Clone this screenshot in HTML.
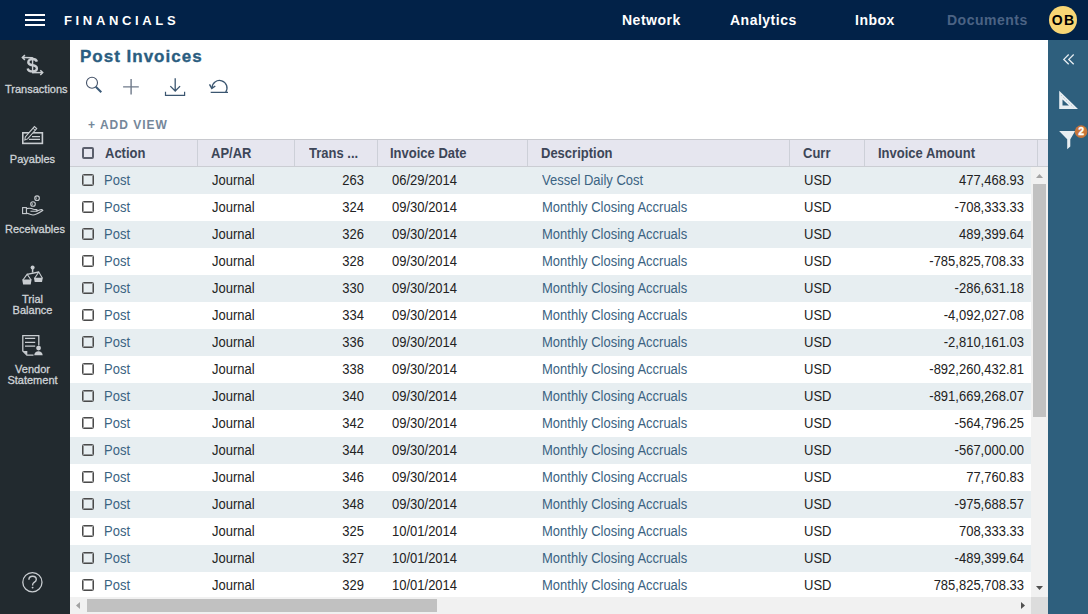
<!DOCTYPE html>
<html><head><meta charset="utf-8">
<style>
*{box-sizing:border-box;margin:0;padding:0}
html,body{width:1088px;height:614px;overflow:hidden;background:#fff;font-family:"Liberation Sans",sans-serif}
.abs{position:absolute}
#top{position:absolute;left:0;top:0;width:1088px;height:40px;background:#022248}
#ham{left:25px;top:14px;width:20px;height:12px}
#ham i{position:absolute;left:0;width:20px;height:2px;background:#fff}
#brand{left:64px;top:13px;font-size:13px;font-weight:bold;color:#fff;letter-spacing:3.65px;line-height:16px}
.nav{position:absolute;top:12px;font-size:14px;font-weight:bold;color:#fff;letter-spacing:0.5px;line-height:17px}
#avatar{left:1049px;top:6px;width:28px;height:28px;border-radius:50%;background:#f8d675;color:#000;font-size:14px;font-weight:bold;text-align:center;line-height:29px;letter-spacing:1.2px;text-indent:1px}
#side{position:absolute;left:0;top:40px;width:70px;height:574px;background:#222a2f}
.sitem{position:absolute;left:5px;width:55px;white-space:nowrap;text-align:center;color:#cfd3d7;font-size:11px;line-height:11px;-webkit-text-stroke:0.3px #cfd3d7}
.sitem svg{position:absolute;left:22px}
#right{position:absolute;left:1048px;top:40px;width:40px;height:574px;background:#2e5f7d}
#title{left:80px;top:47px;font-size:17px;font-weight:bold;color:#2a5d80;letter-spacing:1.0px;-webkit-text-stroke:0.35px #2a5d80;line-height:20px}
#addview{left:88px;top:118px;font-size:12px;font-weight:bold;color:#75879a;letter-spacing:1.0px;line-height:14px}
#grid{position:absolute;left:70px;top:139px;width:978px;height:475px;overflow:hidden}
#ghead{position:absolute;left:0;top:0;width:978px;height:28px;background:#e6e6ef;border-top:1px solid #c8c9ce;border-bottom:1px solid #cbcdd3}
.hc{position:absolute;top:1px;height:26px;line-height:26px;font-size:13px;font-weight:bold;color:#3d4658;white-space:nowrap;transform:scaleY(1.1);transform-origin:0 17.5px}
.sep{position:absolute;top:0;width:1px;height:26px;background:#cdd0d8}
.row{position:absolute;left:0;width:961px;height:27px;line-height:27px;font-size:13px;color:#222}
.row.o{background:#e7eef1}
.row span{position:absolute;top:0;white-space:nowrap;transform:scaleY(1.1);transform-origin:0 18px}
.lnk{color:#3b6382}
.cb{position:absolute;left:12px;top:7px;width:12px;height:12px;border:1px solid #4a4a4a;border-radius:1.5px;box-shadow:inset 0 0 0 1px rgba(74,74,74,0.55)}
.r{text-align:right}
</style></head><body>
<div id="top">
  <div id="ham" class="abs"><i style="top:0"></i><i style="top:5px"></i><i style="top:10px"></i></div>
  <div id="brand" class="abs">FINANCIALS</div>
  <div class="nav" style="left:622px">Network</div>
  <div class="nav" style="left:730px">Analytics</div>
  <div class="nav" style="left:855px">Inbox</div>
  <div class="nav" style="left:947px;color:#4b6384">Documents</div>
  <div id="avatar" class="abs">OB</div>
</div>
<div id="side">
  <svg class="abs" style="left:0;top:0" width="70" height="574" viewBox="0 40 70 574" fill="none" stroke="#c9cdd1">
    <path d="M36.9 61.6 C36.4 59.9 34.6 59 32.5 59 C30.1 59 28.3 60.3 28.3 62.3 C28.3 64.5 30.5 65 32.5 65.3 C35 65.7 36.9 66.5 36.9 68.5 C36.9 70.5 34.9 71.4 32.5 71.4 C30 71.4 28.1 70.4 27.7 68.4" stroke-width="2.4"/>
    <path d="M32.6 57.3 V73.4" stroke-width="1.4"/>
    <path d="M22.6 57.5 L32.6 57.8" stroke-width="1.5"/>
    <path d="M24.9 55.1 L22.4 57.5 L24.9 59.9" stroke-width="1.5"/>
    <path d="M33 72.6 L42.5 72.6" stroke-width="1.5"/>
    <path d="M40.3 70.2 L42.7 72.6 L40.3 75" stroke-width="1.5"/>
    <!-- payables -->
    <rect x="22.8" y="132.8" width="19.6" height="10.6" stroke-width="1.6"/>
    <path d="M32 136.6 H40 M29 139.4 H40" stroke-width="1.3"/>
    <path d="M24.8 140 L25.3 136.9 L34.4 126.6 L36.7 128.6 L27.6 138.9 Z" fill="#222a2f" stroke-width="1.1"/>
    <path d="M33 128.3 L35.2 130.2" stroke-width="0.9"/>
    <!-- receivables -->
    <circle cx="37.05" cy="198.2" r="2.3" stroke-width="1.1"/>
    <circle cx="33" cy="204" r="2.3" stroke-width="1.1"/>
    <path d="M36.3 197.3 V199.2 M32.3 203.1 V205" stroke-width="0.8"/>
    <rect x="22.6" y="207.6" width="3.8" height="6" stroke-width="1.1"/>
    <path d="M26.5 208.6 C28.5 208 31 208 33.5 209.2 L36.5 209.6 C37.6 209.9 37.6 211.3 36.3 211.3 L30.5 211.3" stroke-width="1.1"/>
    <path d="M26.5 213 C28 213.5 30.5 215 33 215 C36 215 40 212.2 42.8 210.5 C42.5 209.5 41.2 209.3 39.5 210 L36.3 211.3" stroke-width="1.1"/>
    <!-- trial balance -->
    <circle cx="32.6" cy="267.4" r="2" fill="#c9cdd1" stroke="none"/>
    <path d="M32.6 268.5 V272.6" stroke-width="1.5"/>
    <path d="M27.1 274.3 L38.8 272" stroke-width="1.3"/>
    <path d="M22.9 280 L27.1 274.3 L31.1 280 M34.6 278.2 L38.8 272 L42.4 278.2" stroke-width="1.1"/>
    <path d="M22.2 279.5 H31.6 L30.7 284.5 H23.1 Z M33.9 277.8 H42.8 L42 282 H34.7 Z" fill="#c9cdd1" stroke="none"/>
    <!-- vendor statement -->
    <path d="M38.8 345.5 V335.6 H22.8 V351 L26.9 355.1 H33.5" stroke-width="1.3"/>
    <path d="M23.3 351 H27.3 V355 Z" fill="#c9cdd1" stroke="none"/>
    <path d="M25 338.4 H35.2 M25 342.3 H35.2 M25 346.2 H35.2" stroke-width="1.3"/>
    <circle cx="38.55" cy="348.1" r="2.4" fill="#c9cdd1" stroke="none"/>
    <path d="M34.2 355.3 C34.4 352.8 36.3 351.3 38.45 351.3 C40.6 351.3 42.5 352.8 42.7 355.3 Z" fill="#c9cdd1" stroke="none"/>
    <!-- help -->
    <circle cx="32.4" cy="582.2" r="9.6" stroke-width="1.3"/>
    <path d="M28.9 579.8 C28.9 577.5 30.5 576.3 32.6 576.3 C34.8 576.3 36.3 577.7 36.3 579.5 C36.3 581.4 34.6 582.2 33.4 583 C32.7 583.5 32.6 584.1 32.6 585.4" stroke-width="1.4"/><circle cx="32.6" cy="587.6" r="0.95" fill="#c9cdd1" stroke="none"/>
  </svg>
  <div class="sitem" style="top:44px">Transactions</div>
  <div class="sitem" style="top:114px">Payables</div>
  <div class="sitem" style="top:184px">Receivables</div>
  <div class="sitem" style="top:254px">Trial<br>Balance</div>
  <div class="sitem" style="top:324px">Vendor<br>Statement</div>
</div>
<div id="right">
  <svg class="abs" style="left:0;top:0" width="40" height="574" viewBox="1048 40 40 574" fill="none" stroke="#e8eef2">
    <path d="M1068.7 54.5 L1063.8 59.4 L1068.7 64.3 M1073.7 54.5 L1068.8 59.4 L1073.7 64.3" stroke-width="1.3"/>
    <path d="M1059.2 90.8 V109.1 H1078 Z M1062.5 99.6 V105.6 H1069 Z" fill="#e8eef2" fill-rule="evenodd" stroke="none"/>
    <path d="M1061.3 95.3 L1073.3 107" stroke="#2e5f7d" stroke-opacity="0.45" stroke-width="1" stroke-dasharray="0.8 1.5"/>
    <path d="M1059.1 130.9 H1075.2 L1070.3 139.3 V146.6 L1067.2 149.2 V139.3 Z" fill="#e8eef2" stroke="none"/>
    <circle cx="1081.1" cy="131.6" r="6.3" fill="#c9763a" stroke="none"/>
    <text x="1081.2" y="135.3" font-family="Liberation Sans" font-weight="bold" font-size="10.5" fill="#fff" stroke="#fff" stroke-width="0.3" text-anchor="middle">2</text>
  </svg>
</div>
<div id="title" class="abs">Post Invoices</div>
<svg class="abs" style="left:70px;top:40px" width="200" height="70" viewBox="70 40 200 70" fill="none">
  <circle cx="92" cy="82.8" r="5.5" stroke="#46546a" stroke-width="1.1"/>
  <path d="M95.8 86.8 L101.3 92.3" stroke="#3b5a78" stroke-width="2"/>
  <path d="M131.1 79 V94.6 M123.1 86.9 H138.8" stroke="#6f7a8a" stroke-width="1.4"/>
  <path d="M175.2 78.2 V91 M170.3 86.1 L175.2 91 L180.1 86.1" stroke="#3b5670" stroke-width="1.3"/>
  <path d="M165.5 91.8 V95.3 H184.6 V91.8" stroke="#3b5670" stroke-width="1.2"/>
  <path d="M212 88 A7.5 7.5 0 1 1 225.6 92.3 M228 92.3 H210.7" stroke="#3b5670" stroke-width="1.3"/>
  <path d="M209.5 84.4 L211.8 88.4 L215.3 86" stroke="#3b5670" stroke-width="1.4"/>
</svg>
<div id="addview" class="abs">+ ADD VIEW</div>
<div id="grid">
  <div id="ghead">
    <div class="cb" style="top:7px;border:2px solid #5b5f6c;border-radius:2px;box-shadow:none"></div>
    <div class="hc" style="left:35px">Action</div>
    <div class="sep" style="left:127px"></div>
    <div class="hc" style="left:141px">AP/AR</div>
    <div class="sep" style="left:224px"></div>
    <div class="hc" style="left:239px">Trans ...</div>
    <div class="sep" style="left:307px"></div>
    <div class="hc" style="left:320px">Invoice Date</div>
    <div class="sep" style="left:457px"></div>
    <div class="hc" style="left:471px">Description</div>
    <div class="sep" style="left:719px"></div>
    <div class="hc" style="left:733px">Curr</div>
    <div class="sep" style="left:794px"></div>
    <div class="hc" style="left:808px">Invoice Amount</div>
    <div class="sep" style="left:967px"></div>
  </div>
  <div id="rows">
<div class="row o" style="top:28px"><div class="cb"></div><span class="lnk" style="left:34px">Post</span><span style="left:142px">Journal</span><span class="r" style="right:667px">263</span><span style="left:322px">06/29/2014</span><span class="lnk" style="left:472px">Vessel Daily Cost</span><span style="left:734px">USD</span><span class="r" style="right:7px">477,468.93</span></div>
<div class="row" style="top:55px"><div class="cb"></div><span class="lnk" style="left:34px">Post</span><span style="left:142px">Journal</span><span class="r" style="right:667px">324</span><span style="left:322px">09/30/2014</span><span class="lnk" style="left:472px">Monthly Closing Accruals</span><span style="left:734px">USD</span><span class="r" style="right:7px">-708,333.33</span></div>
<div class="row o" style="top:82px"><div class="cb"></div><span class="lnk" style="left:34px">Post</span><span style="left:142px">Journal</span><span class="r" style="right:667px">326</span><span style="left:322px">09/30/2014</span><span class="lnk" style="left:472px">Monthly Closing Accruals</span><span style="left:734px">USD</span><span class="r" style="right:7px">489,399.64</span></div>
<div class="row" style="top:109px"><div class="cb"></div><span class="lnk" style="left:34px">Post</span><span style="left:142px">Journal</span><span class="r" style="right:667px">328</span><span style="left:322px">09/30/2014</span><span class="lnk" style="left:472px">Monthly Closing Accruals</span><span style="left:734px">USD</span><span class="r" style="right:7px">-785,825,708.33</span></div>
<div class="row o" style="top:136px"><div class="cb"></div><span class="lnk" style="left:34px">Post</span><span style="left:142px">Journal</span><span class="r" style="right:667px">330</span><span style="left:322px">09/30/2014</span><span class="lnk" style="left:472px">Monthly Closing Accruals</span><span style="left:734px">USD</span><span class="r" style="right:7px">-286,631.18</span></div>
<div class="row" style="top:163px"><div class="cb"></div><span class="lnk" style="left:34px">Post</span><span style="left:142px">Journal</span><span class="r" style="right:667px">334</span><span style="left:322px">09/30/2014</span><span class="lnk" style="left:472px">Monthly Closing Accruals</span><span style="left:734px">USD</span><span class="r" style="right:7px">-4,092,027.08</span></div>
<div class="row o" style="top:190px"><div class="cb"></div><span class="lnk" style="left:34px">Post</span><span style="left:142px">Journal</span><span class="r" style="right:667px">336</span><span style="left:322px">09/30/2014</span><span class="lnk" style="left:472px">Monthly Closing Accruals</span><span style="left:734px">USD</span><span class="r" style="right:7px">-2,810,161.03</span></div>
<div class="row" style="top:217px"><div class="cb"></div><span class="lnk" style="left:34px">Post</span><span style="left:142px">Journal</span><span class="r" style="right:667px">338</span><span style="left:322px">09/30/2014</span><span class="lnk" style="left:472px">Monthly Closing Accruals</span><span style="left:734px">USD</span><span class="r" style="right:7px">-892,260,432.81</span></div>
<div class="row o" style="top:244px"><div class="cb"></div><span class="lnk" style="left:34px">Post</span><span style="left:142px">Journal</span><span class="r" style="right:667px">340</span><span style="left:322px">09/30/2014</span><span class="lnk" style="left:472px">Monthly Closing Accruals</span><span style="left:734px">USD</span><span class="r" style="right:7px">-891,669,268.07</span></div>
<div class="row" style="top:271px"><div class="cb"></div><span class="lnk" style="left:34px">Post</span><span style="left:142px">Journal</span><span class="r" style="right:667px">342</span><span style="left:322px">09/30/2014</span><span class="lnk" style="left:472px">Monthly Closing Accruals</span><span style="left:734px">USD</span><span class="r" style="right:7px">-564,796.25</span></div>
<div class="row o" style="top:298px"><div class="cb"></div><span class="lnk" style="left:34px">Post</span><span style="left:142px">Journal</span><span class="r" style="right:667px">344</span><span style="left:322px">09/30/2014</span><span class="lnk" style="left:472px">Monthly Closing Accruals</span><span style="left:734px">USD</span><span class="r" style="right:7px">-567,000.00</span></div>
<div class="row" style="top:325px"><div class="cb"></div><span class="lnk" style="left:34px">Post</span><span style="left:142px">Journal</span><span class="r" style="right:667px">346</span><span style="left:322px">09/30/2014</span><span class="lnk" style="left:472px">Monthly Closing Accruals</span><span style="left:734px">USD</span><span class="r" style="right:7px">77,760.83</span></div>
<div class="row o" style="top:352px"><div class="cb"></div><span class="lnk" style="left:34px">Post</span><span style="left:142px">Journal</span><span class="r" style="right:667px">348</span><span style="left:322px">09/30/2014</span><span class="lnk" style="left:472px">Monthly Closing Accruals</span><span style="left:734px">USD</span><span class="r" style="right:7px">-975,688.57</span></div>
<div class="row" style="top:379px"><div class="cb"></div><span class="lnk" style="left:34px">Post</span><span style="left:142px">Journal</span><span class="r" style="right:667px">325</span><span style="left:322px">10/01/2014</span><span class="lnk" style="left:472px">Monthly Closing Accruals</span><span style="left:734px">USD</span><span class="r" style="right:7px">708,333.33</span></div>
<div class="row o" style="top:406px"><div class="cb"></div><span class="lnk" style="left:34px">Post</span><span style="left:142px">Journal</span><span class="r" style="right:667px">327</span><span style="left:322px">10/01/2014</span><span class="lnk" style="left:472px">Monthly Closing Accruals</span><span style="left:734px">USD</span><span class="r" style="right:7px">-489,399.64</span></div>
<div class="row" style="top:433px"><div class="cb"></div><span class="lnk" style="left:34px">Post</span><span style="left:142px">Journal</span><span class="r" style="right:667px">329</span><span style="left:322px">10/01/2014</span><span class="lnk" style="left:472px">Monthly Closing Accruals</span><span style="left:734px">USD</span><span class="r" style="right:7px">785,825,708.33</span></div>
</div>
</div>
<div class="abs" style="left:1031px;top:167px;width:17px;height:430px;background:#f1f1f1">
  <svg class="abs" style="left:0;top:0" width="17" height="430" viewBox="1031 167 17 430">
    <path d="M1036 178 L1039.5 174 L1043 178 Z" fill="#a3a3a3"/>
    <rect x="1033" y="184" width="13" height="233" fill="#c1c1c1"/>
    <path d="M1036 586 L1043 586 L1039.5 590 Z" fill="#505050"/>
  </svg>
</div>
<div class="abs" style="left:70px;top:597px;width:961px;height:17px;background:#f1f1f1">
  <svg class="abs" style="left:0;top:0" width="961" height="17" viewBox="70 597 961 17">
    <path d="M80 602 L76 605.5 L80 609 Z" fill="#a3a3a3"/>
    <rect x="87" y="599" width="350" height="13" fill="#c1c1c1"/>
    <path d="M1021 602 L1025 605.5 L1021 609 Z" fill="#505050"/>
  </svg>
</div>
<div class="abs" style="left:1031px;top:597px;width:17px;height:17px;background:#dcdcdc"></div>
</body></html>
